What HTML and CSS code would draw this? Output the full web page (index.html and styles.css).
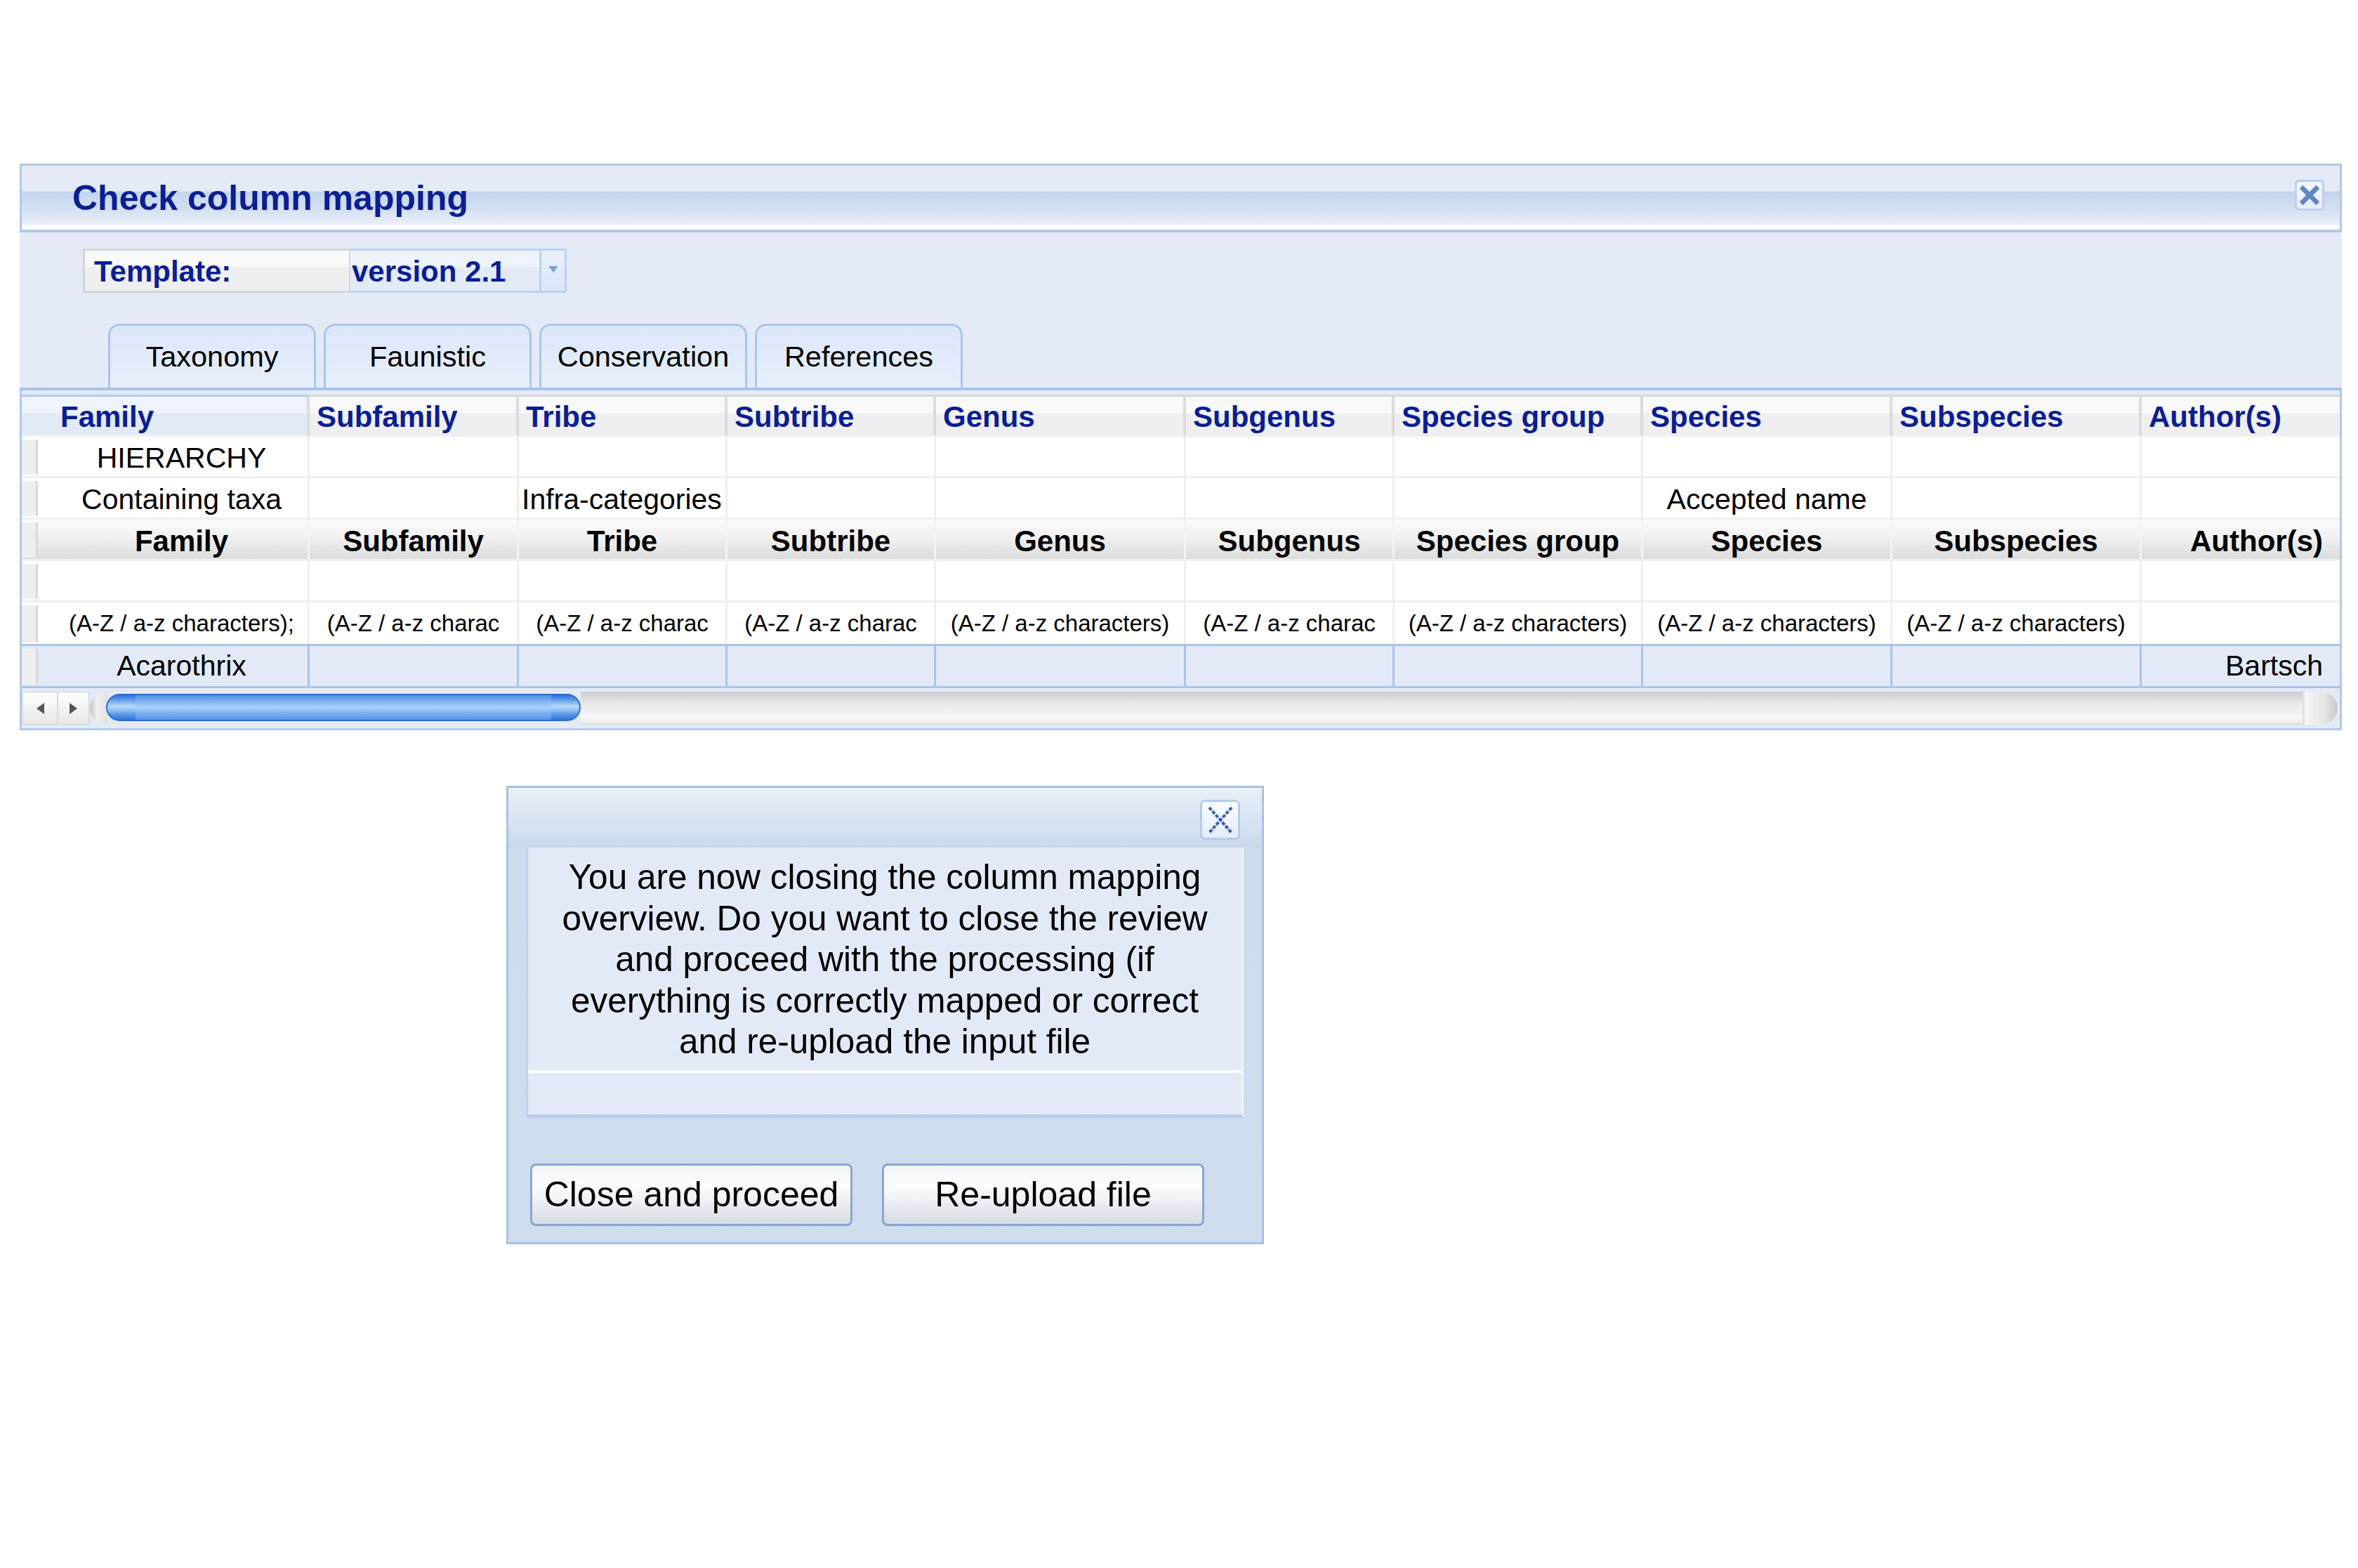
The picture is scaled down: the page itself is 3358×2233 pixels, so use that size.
FILE: index.html
```html
<!DOCTYPE html>
<html lang="en">
<head>
<meta charset="utf-8">
<title>Check column mapping</title>
<link rel="stylesheet" href="styles.css">
</head>
<body>
<div class="panel">
  <div class="titlebar">
    <span class="title">Check column mapping</span>
    <span class="tb-close">
      <svg viewBox="0 0 42 44" width="36" height="38"><path d="M10 11 L32 33 M32 11 L10 33" stroke="#5f87c2" stroke-width="8" stroke-linecap="square"/></svg>
    </span>
  </div>
  <div class="panel-body">
    <div class="template-row">
      <div class="tpl-label">Template:</div>
      <div class="tpl-value">version 2.1</div>
      <div class="tpl-btn"><span class="tri"></span></div>
    </div>
    <div class="tabs">
      <div class="tab">Taxonomy</div>
      <div class="tab">Faunistic</div>
      <div class="tab">Conservation</div>
      <div class="tab">References</div>
    </div>
    <div class="grid-wrap">
      <div class="grid">
        <div class="hd fam">Family</div>
        <div class="hd">Subfamily</div>
        <div class="hd">Tribe</div>
        <div class="hd">Subtribe</div>
        <div class="hd">Genus</div>
        <div class="hd">Subgenus</div>
        <div class="hd">Species group</div>
        <div class="hd">Species</div>
        <div class="hd">Subspecies</div>
        <div class="hd last">Author(s)</div>

        <div class="c fam">HIERARCHY</div>
        <div class="c"></div><div class="c"></div><div class="c"></div><div class="c"></div>
        <div class="c"></div><div class="c"></div><div class="c"></div><div class="c"></div><div class="c last"></div>

        <div class="c fam">Containing taxa</div>
        <div class="c"></div>
        <div class="c left">Infra-categories</div>
        <div class="c"></div><div class="c"></div><div class="c"></div><div class="c"></div>
        <div class="c">Accepted name</div>
        <div class="c"></div><div class="c last"></div>

        <div class="c lbl fam">Family</div>
        <div class="c lbl">Subfamily</div>
        <div class="c lbl">Tribe</div>
        <div class="c lbl">Subtribe</div>
        <div class="c lbl">Genus</div>
        <div class="c lbl">Subgenus</div>
        <div class="c lbl">Species group</div>
        <div class="c lbl">Species</div>
        <div class="c lbl">Subspecies</div>
        <div class="c lbl last right">Author(s)</div>

        <div class="c fam"></div>
        <div class="c"></div><div class="c"></div><div class="c"></div><div class="c"></div>
        <div class="c"></div><div class="c"></div><div class="c"></div><div class="c"></div><div class="c last"></div>

        <div class="c sm fam">(A-Z / a-z characters);</div>
        <div class="c sm">(A-Z / a-z charac</div>
        <div class="c sm">(A-Z / a-z charac</div>
        <div class="c sm">(A-Z / a-z charac</div>
        <div class="c sm">(A-Z / a-z characters)</div>
        <div class="c sm">(A-Z / a-z charac</div>
        <div class="c sm">(A-Z / a-z characters)</div>
        <div class="c sm">(A-Z / a-z characters)</div>
        <div class="c sm">(A-Z / a-z characters)</div>
        <div class="c sm last"></div>

        <div class="c sel fam">Acarothrix</div>
        <div class="c sel"></div><div class="c sel"></div><div class="c sel"></div><div class="c sel"></div>
        <div class="c sel"></div><div class="c sel"></div><div class="c sel"></div><div class="c sel"></div>
        <div class="c sel last right">Bartsch</div>
      </div>
      <div class="hscroll">
        <div class="arr"><span class="tri-l"></span></div>
        <div class="arr arr2"><span class="tri-r"></span></div>
        <div class="cap-l"></div>
        <div class="thumb"><span class="thumb-mid"></span></div>
        <div class="track"></div>
        <div class="cap-r"></div>
      </div>
    </div>
  </div>
</div>

<div class="dialog">
  <div class="dlg-head">
    <span class="dlg-close">
      <svg viewBox="0 0 51 51" width="51" height="51"><path d="M10 8 L42 44 M42 8 L10 44" stroke="#3b5cb2" stroke-width="4" stroke-dasharray="5 2"/></svg>
    </span>
  </div>
  <div class="dlg-content">
    <div class="dlg-text">You are now closing the column mapping overview. Do you want to close the review and proceed with the processing (if everything is correctly mapped or correct and re-upload the input file</div>
    <div class="dlg-strip"></div>
  </div>
  <div class="dlg-buttons">
    <button class="btn">Close and proceed</button>
    <button class="btn">Re-upload file</button>
  </div>
</div>
</body>
</html>
```

FILE: styles.css
```css
* { box-sizing: border-box; }

body {
  margin: 0;
  padding: 233px 0 0 28px;
  background: #ffffff;
  font-family: "Liberation Sans", Arial, sans-serif;
  color: #000;
  width: 3358px;
  height: 2233px;
  position: relative;
}

.panel {
  width: 3307px;
}

/* ---------- title bar ---------- */
.titlebar {
  height: 98px;
  border: 3px solid #b2c8e9;
  border-bottom-width: 4px;
  background: linear-gradient(to bottom,
    #e4ebf7 0px, #e4ebf7 36px,
    #c3d5ee 37px, #d3e0f2 62px, #eaf0f9 84px,
    #ffffff 85px, #ffffff 91px);
  display: flex;
  align-items: center;
  justify-content: space-between;
  padding-left: 72px;
  padding-right: 22px;
}

.title {
  font-size: 50px;
  line-height: 50px;
  font-weight: bold;
  color: #0b1e92;
}

.tb-close {
  align-self: flex-start;
  margin-top: 20px;
  width: 42px;
  height: 44px;
  border: 3px solid #bcd0ef;
  border-radius: 6px;
  background: linear-gradient(#f4f7fd, #e6eefa);
  display: flex;
  align-items: center;
  justify-content: center;
}

/* ---------- body ---------- */
.panel-body {
  background: linear-gradient(to bottom, #e4ebf7 0%, #e4ebf7 55%, #d9e3f2 100%);
  padding-top: 23px;
}

.template-row {
  display: flex;
  margin-left: 90px;
  height: 63px;
  font-size: 42px;
  font-weight: bold;
  color: #0b1e92;
}

.tpl-label {
  width: 381px;
  border: 3px solid #d6d6d6;
  border-right-width: 2px;
  background: linear-gradient(to bottom, #f9f9f9 0%, #f9f9f9 40%, #efeff1 40%, #efeff1 100%);
  display: flex;
  align-items: center;
  padding: 3px 0 0 13px;
}

.tpl-value {
  width: 269px;
  border-top: 3px solid #bcd1f1;
  border-bottom: 3px solid #bcd1f1;
  background: linear-gradient(to bottom, #eef4fd 0%, #eef4fd 40%, #e3ebf9 40%, #e3ebf9 100%);
  display: flex;
  align-items: center;
  padding: 3px 0 0 2px;
}

.tpl-btn {
  width: 39px;
  border: 3px solid #bcd1f1;
  background: linear-gradient(#e9f0fc, #dbe7f8);
  display: flex;
  justify-content: center;
  padding-top: 22px;
}

.tri {
  width: 0;
  height: 0;
  border-left: 7px solid transparent;
  border-right: 7px solid transparent;
  border-top: 9px solid #7c9fd4;
}

/* ---------- tabs ---------- */
.tabs {
  display: flex;
  gap: 11px;
  margin-top: 44px;
  padding-left: 126px;
  border-bottom: 4px solid #a9c3ea;
}

.tab {
  width: 296px;
  height: 91px;
  border: 3px solid #abc5ea;
  border-bottom: none;
  border-radius: 16px 16px 0 0;
  background: linear-gradient(#dce7f8, #e7effb);
  display: flex;
  align-items: center;
  justify-content: center;
  font-size: 41.5px;
  color: #000;
}

/* ---------- grid ---------- */
.grid-wrap {
  border: 3px solid #b3c8e9;
  border-top: none;
  background: #e4ebf7;
  padding-top: 6px;
}

.grid {
  display: grid;
  grid-template-columns: 410px 298px 297px 297px 356px 297px 354px 355px 355px 282px;
  grid-template-rows: 60px 59px 59px 59px 59px 59px 63px;
}

.hd {
  border-top: 3px solid #d8d8d8;
  border-right: 4px solid #dcdcdc;
  border-bottom: 3px solid #efefef;
  background: linear-gradient(to bottom, #f9f9f9 0%, #f9f9f9 45%, #efeff2 45%, #efeff2 100%);
  display: flex;
  align-items: center;
  padding: 4px 0 0 10px;
  font-size: 42px;
  font-weight: bold;
  color: #0b1e92;
  white-space: nowrap;
  overflow: hidden;
}

.hd.fam {
  border-top-color: #b6cbec;
  background: linear-gradient(to bottom, #eef3fc 0%, #eef3fc 45%, #e2eaf8 45%, #e2eaf8 100%);
  padding-left: 55px;
}

.hd.last { border-right: none; }

.c {
  position: relative;
  background: #ffffff;
  border-right: 3px solid #efefef;
  border-bottom: 3px solid #efefef;
  display: flex;
  align-items: center;
  justify-content: center;
  padding-top: 5px;
  font-size: 41px;
  white-space: nowrap;
}

.c.last { border-right: none; }

.c.fam { padding-left: 48px; }

.c.fam::before {
  content: "";
  position: absolute;
  left: 0;
  top: 4px;
  bottom: 2px;
  width: 20px;
  background: #efefef;
  border-right: 3px solid #d8d8d8;
}

.c.left {
  justify-content: flex-start;
  padding-left: 4px;
}

.c.right {
  justify-content: flex-end;
  padding-right: 24px;
}

.c.lbl {
  background: linear-gradient(to bottom, #fbfbfb 0%, #f1f1f1 45%, #dcdcdc 100%);
  border-right-color: #f4f4f4;
  font-weight: bold;
  font-size: 42px;
}

.c.sm {
  font-size: 33px;
  border-bottom: none;
  padding-top: 0;
}

.c.sel {
  padding-top: 0;
  background: #e3eaf7;
  border-top: 3px solid #a9c3ea;
  border-bottom: 3px solid #a9c3ea;
  border-right: 3px solid #a9c3ea;
}

.c.sel.last { border-right: none; }

/* ---------- horizontal scrollbar ---------- */
.hscroll {
  display: flex;
  height: 47px;
  margin: 5px 3px 5px 1px;
}

.arr {
  width: 51px;
  background: linear-gradient(#ffffff, #e8e8e8);
  border: 1px solid #d3d3d3;
  border-right: 2px solid #dadada;
  display: flex;
  align-items: center;
  justify-content: center;
}

.arr2 { width: 45px; border-left: none; }

.tri-l {
  width: 0; height: 0;
  border-top: 8px solid transparent;
  border-bottom: 8px solid transparent;
  border-right: 11px solid #555;
}

.tri-r {
  width: 0; height: 0;
  border-top: 8px solid transparent;
  border-bottom: 8px solid transparent;
  border-left: 11px solid #555;
}

.cap-l {
  width: 25px;
  border-radius: 24px 0 0 24px / 50% 0 0 50%;
  background: linear-gradient(to right, #c4c4c4, #efefef 40%, #e2e2e2);
}

.thumb {
  width: 676px;
  margin: 3px 0 5px -2px;
  border-radius: 20px;
  border: 2px solid #2e6ed3;
  background: linear-gradient(to bottom, #2f72d8 0%, #6aa3ec 22%, #b9d8fb 45%, #8cbcf4 62%, #4a8ce3 85%, #3677d8 100%);
  display: flex;
  padding: 0 40px;
}

.thumb-mid {
  flex: 1;
  background: linear-gradient(to bottom, #4d8ee4 0%, #7fb2f1 25%, #a9cff9 50%, #7fb4f2 70%, #5596e6 100%);
}

.track {
  flex: 1;
  background: linear-gradient(to bottom, #cdcdcd 0%, #e7e7e7 35%, #f8f8f8 80%, #ededed 100%);
  border-bottom: 2px solid #dcdcdc;
}

.cap-r {
  width: 50px;
  border-radius: 0 24px 24px 0 / 0 50% 50% 0;
  background: linear-gradient(to right, #f7f7f7, #e6e6e6 60%, #c8c8c8);
  border-left: 3px solid #e0e0e0;
}

/* ---------- dialog (modal window) ---------- */
.dialog {
  position: absolute;
  left: 721px;
  top: 1119px;
  width: 1079px;
  height: 653px;
  border: 3px solid #a9c1e3;
  background: linear-gradient(to bottom, #eaf0f9 0px, #d6e3f1 50px, #c9d9ec 85px, #cddcee 86px, #cfdeef 100%);
}

.dlg-head {
  height: 85px;
  display: flex;
  justify-content: flex-end;
  align-items: flex-start;
  padding: 17px 31px 0 0;
}

.dlg-close {
  width: 57px;
  height: 57px;
  border: 3px solid #b5cbec;
  border-radius: 7px;
  background: linear-gradient(#fbfdff, #e3ecf9);
  display: flex;
  align-items: center;
  justify-content: center;
}

.dlg-content {
  margin-left: 25px;
  width: 1022px;
  background: #e3eaf7;
  border-left: 3px solid #c3d4ec;
  border-right: 3px solid #eef3fb;
  border-bottom: 5px solid #b9cdea;
}

.dlg-text {
  padding: 13px 40px 11px;
  font-size: 49.5px;
  line-height: 58.5px;
  text-align: center;
  color: #000;
}

.dlg-strip {
  height: 63px;
  border-top: 4px solid #ffffff;
}

.dlg-buttons {
  display: flex;
  gap: 42px;
  margin-top: 65px;
  padding-left: 31px;
}

.btn {
  width: 459px;
  height: 89px;
  border: 3px solid #8aa6cd;
  border-radius: 8px;
  background: linear-gradient(to bottom, #f3f6fa 0%, #fbfcfd 35%, #eef1f5 60%, #d5dbe3 100%);
  font-family: "Liberation Sans", Arial, sans-serif;
  font-size: 50px;
  color: #000;
  padding: 0;
}
```
